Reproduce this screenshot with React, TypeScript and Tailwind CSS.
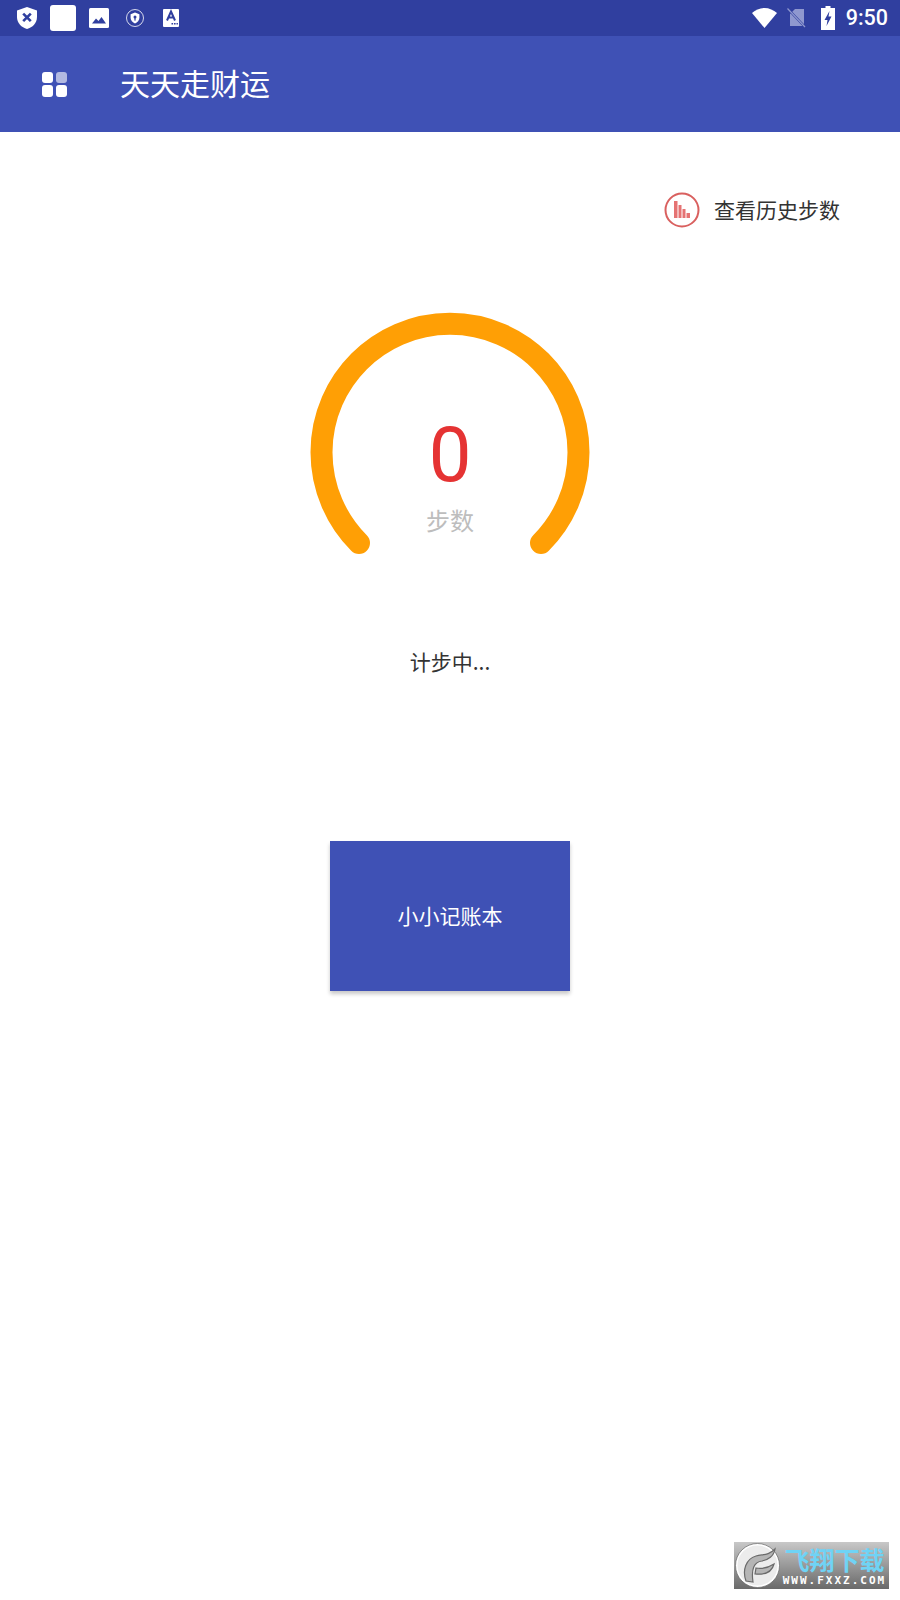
const cjk = "font-['Noto_Sans_CJK_SC','Noto_Sans',sans-serif]";

function StatusBar() {
	return (
		<div className="flex h-[36px] shrink-0 items-center bg-[#303f9f] text-white">
			<svg className="ml-[17px] h-[22px] w-[20px]" viewBox="0 0 20 22">
				<path d="M10 0 L20 3.5 V10 C20 16 15.5 20.5 10 22 C4.5 20.5 0 16 0 10 V3.5 Z" fill="#fff" />
				<path d="M6.2 6.6 L13.8 14.2 M13.8 6.6 L6.2 14.2" stroke="#303f9f" strokeWidth="2.6" />
			</svg>
			<div className="ml-[13px] h-[26px] w-[26px] rounded-[3px] bg-white" />
			<svg className="ml-[13px] h-[20px] w-[20px]" viewBox="0 0 20 20">
				<rect width="20" height="20" rx="1.5" fill="#fff" />
				<path d="M3 15.5 L7 10.5 L9.5 13 L12.5 9 L17 15.5 Z" fill="#303f9f" />
			</svg>
			<svg className="ml-[17px] h-[18px] w-[18px]" viewBox="0 0 18 18">
				<circle cx="9" cy="9" r="8.5" fill="none" stroke="#fff" strokeWidth="0.8" />
				<path d="M9 3.6 L13.4 5.2 V8.8 C13.4 11.4 11.4 13.4 9 14.4 C6.6 13.4 4.6 11.4 4.6 8.8 V5.2 Z" fill="#fff" />
				<circle cx="9" cy="8" r="1.5" fill="#303f9f" />
				<rect x="8.4" y="8.6" width="1.2" height="3" fill="#303f9f" />
			</svg>
			<svg className="ml-[19px] h-[18px] w-[16px]" viewBox="0 0 16 18">
				<rect width="16" height="18" rx="1" fill="#fff" />
				<path d="M4 11.5 L8 2.5 L12 11.5 M5.4 8.6 H10.6" fill="none" stroke="#303f9f" strokeWidth="2" />
				<path d="M8.5 14 h1.6 v1.6 h-1.6 Z M11 14 h1.6 v1.6 h-1.6 Z M13.5 14 h1.4 v1.6 h-1.4 Z" fill="#303f9f" />
			</svg>
			<svg className="ml-auto h-[20px] w-[25px]" viewBox="0 0 25 20">
				<path d="M12.5 20 L0 5 C3.5 2 7.8 0 12.5 0 C17.2 0 21.5 2 25 5 Z" fill="#fff" />
			</svg>
			<svg className="ml-[10px] h-[20px] w-[20px]" viewBox="0 0 20 20">
				<path d="M8 1 H17 V18 H3 V6 Z" fill="#8f98cf" />
				<path d="M1 1 L19 20" stroke="#303f9f" strokeWidth="2.4" />
				<path d="M0.5 0.5 L18 19" stroke="#8f98cf" strokeWidth="1.2" />
			</svg>
			<svg className="ml-[14px] h-[24px] w-[14px]" viewBox="0 0 14 24">
				<path d="M4.5 0 H9.5 V2 H14 V24 H0 V2 H4.5 Z" fill="#fff" />
				<path d="M8.5 5 L3.5 14 H6.5 L5.5 20 L10.5 10.5 H7.5 Z" fill="#303f9f" />
			</svg>
			<span className="ml-[11px] mr-[12px] font-['Roboto',sans-serif] text-[21.5px] font-medium leading-none">9:50</span>
		</div>
	);
}

function AppBar() {
	return (
		<div className="flex h-[96px] shrink-0 items-center bg-[#3f51b5] pl-[42px] text-white">
			<div className="grid h-[25px] w-[25px] grid-cols-2 grid-rows-[11px_12px] gap-[2px_3px]">
				<div className="rounded-[3px] bg-white" />
				<div className="rounded-[3px] bg-white/60" />
				<div className="rounded-[3px] bg-white" />
				<div className="rounded-[3px] bg-white" />
			</div>
			<span className={`mb-[4px] ml-[53px] text-[30px] leading-none ${cjk}`}>天天走财运</span>
		</div>
	);
}

function Gauge() {
	return (
		<div className="relative mx-auto h-[250px] w-[300px]">
			<svg className="h-[250px] w-[300px]" viewBox="0 0 300 250">
				<path
					d="M59 232 A128.5 128.5 0 1 1 241 232"
					fill="none"
					stroke="#ff9f05"
					strokeWidth="22"
					strokeLinecap="round"
				/>
			</svg>
			<div className="absolute inset-x-0 top-[99px] flex flex-col items-center">
				<span className="font-['Roboto',sans-serif] text-[76px] leading-[90px] text-[#e53333]">0</span>
				<span className={`mt-[2px] text-[24px] leading-[36px] text-[#bdbdbd] ${cjk}`}>步数</span>
			</div>
		</div>
	);
}

function Watermark() {
	return (
		<div className="absolute left-[734px] top-[1542px] flex h-[47px] w-[155px] items-center bg-gradient-to-b from-[#c8c8c8] via-[#999999] to-[#6a6a6a]">
			<svg className="ml-[1px] h-[45px] w-[45px] shrink-0" viewBox="0 0 45 45">
				<circle cx="22.5" cy="22.5" r="21" fill="#ececec" stroke="#fff" strokeWidth="2" />
				<circle cx="22.5" cy="22.5" r="22" fill="none" stroke="#666" strokeWidth="0.7" />
				<path d="M11 38 C7 27 11 16 21 13 C28 11 33 13 40 6 C39 13 33 17 27 18 C19 19 16 26 18 39 Z" fill="#b5b5b5" stroke="#6a6a6a" strokeWidth="1.2" />
				<path d="M21 25 C27 26 33 25 39 21 C37 29 30 32 20 31 Z" fill="#b5b5b5" stroke="#6a6a6a" strokeWidth="1.2" />
			</svg>
			<div className="ml-[2px] flex w-[105px] flex-col items-center text-center">
				<span className={`text-[25px] font-bold leading-[29px] text-[#6fd3f5] ${cjk}`}>飞翔下载</span>
				<span className="font-['DejaVu_Sans_Mono',monospace] text-[11px] font-bold leading-[13px] tracking-[2px] text-white">WWW.FXXZ.COM</span>
			</div>
		</div>
	);
}

export default function App() {
	return (
		<div className="relative flex h-[1600px] w-[900px] flex-col overflow-hidden bg-white">
			<StatusBar />
			<AppBar />
			<div className="flex justify-end pr-[60px] pt-[60px]">
				<div className="flex items-center gap-[14px]">
					<svg className="h-[36px] w-[36px]" viewBox="0 0 36 36">
						<circle cx="18" cy="18" r="16.5" fill="none" stroke="#d9605f" strokeWidth="2" />
						<path d="M10 9 h3.5 v17 h-3.5 Z M14.5 13 h3 v13 h-3 Z M18.5 17 h3 v9 h-3 Z M22.5 21 h3.5 v5 h-3.5 Z" fill="#e57373" />
					</svg>
					<span className={`mb-[2px] text-[21px] leading-[34px] text-[#333] ${cjk}`}>查看历史步数</span>
				</div>
			</div>
			<div className="mt-[83px]">
				<Gauge />
			</div>
			<p className={`mt-[84px] text-center text-[21px] leading-[32px] text-[#333] ${cjk}`}>计步中...</p>
			<div className="mt-[164px] flex justify-center">
				<button className={`h-[150px] w-[240px] bg-[#3f51b5] text-[21px] text-white shadow-[0_3px_4px_rgba(0,0,0,0.22)] ${cjk}`}>
					小小记账本
				</button>
			</div>
			<Watermark />
		</div>
	);
}
